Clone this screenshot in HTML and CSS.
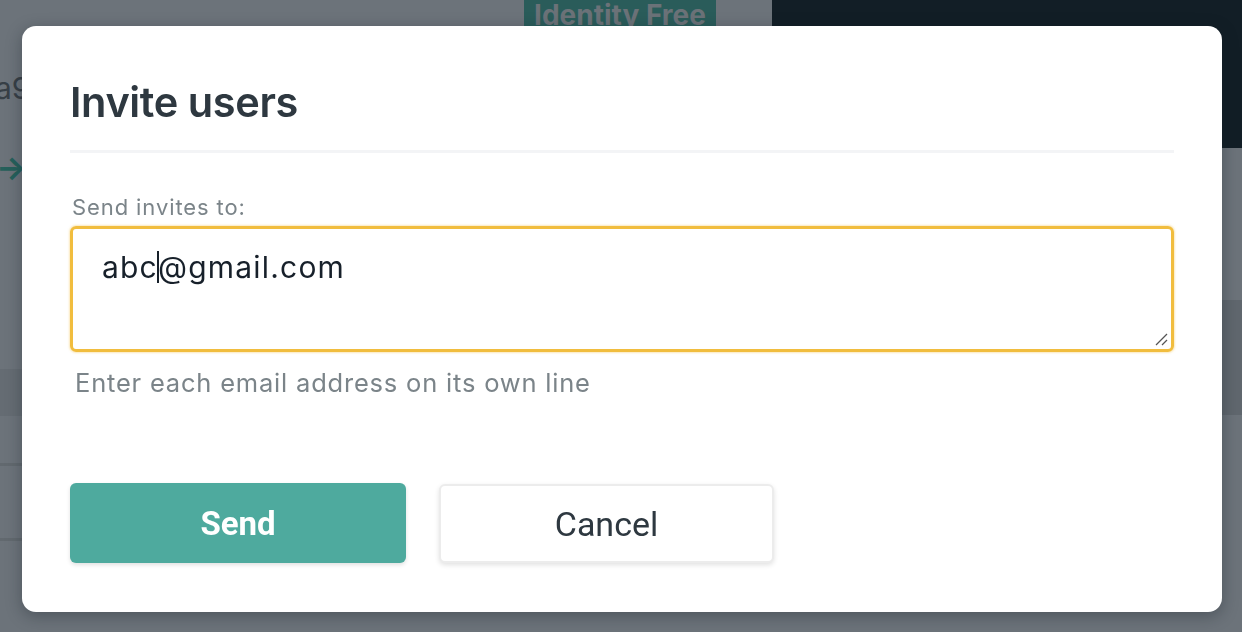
FILE: index.html
```html
<!DOCTYPE html>
<html lang="en">
<head>
<meta charset="utf-8">
<title>Invite users</title>
<link rel="stylesheet" href="styles.css">
</head>
<body>
<div class="page">
  <div class="main">
    <div class="topbar">
      <span class="badge">Identity Free</span>
    </div>
    <div class="crumb">a9</div>
    <div class="arrow">→</div>
    <div class="table">
      <div class="row row-head"></div>
      <div class="row"></div>
      <div class="row row-tall"></div>
    </div>
  </div>
  <div class="side">
    <div class="side-dark"></div>
    <div class="side-gap"></div>
    <div class="side-band"></div>
  </div>
</div>

<div class="modal">
  <h1 class="modal-title">Invite users</h1>
  <div class="field">
    <label class="field-label">Send invites to:</label>
    <div class="textarea">
      <span class="ta-text">abc<span class="caret"></span>@gmail.com</span>
      <svg class="grip" width="14" height="14" viewBox="0 0 14 14">
        <line x1="13" y1="2" x2="2" y2="13" stroke="#555" stroke-width="1.3"/>
        <line x1="13" y1="8" x2="8" y2="13" stroke="#555" stroke-width="1.3"/>
      </svg>
    </div>
    <p class="hint">Enter each email address on its own line</p>
  </div>
  <div class="actions">
    <button class="btn btn-primary">Send</button>
    <button class="btn btn-secondary">Cancel</button>
  </div>
</div>
</body>
</html>
```

FILE: styles.css
```css
html, body {
  margin: 0;
  padding: 0;
  width: 1242px;
  height: 632px;
  overflow: hidden;
  background: #6c737a;
  font-family: Inter, "Noto Sans", sans-serif;
}

.page {
  display: flex;
  width: 1242px;
  height: 632px;
}

.main {
  width: 772px;
  display: flex;
  flex-direction: column;
}

.topbar {
  height: 40px;
  padding-left: 524px;
}

.badge {
  display: inline-block;
  width: 192px;
  height: 40px;
  margin-top: -6px;
  box-sizing: border-box;
  padding-top: 4px;
  background: #2a5c5a;
  color: #6b7278;
  font-weight: 700;
  font-size: 28px;
  line-height: 34px;
  text-align: center;
  border-radius: 5px;
}

.crumb {
  margin-top: 30px;
  margin-left: -5px;
  font-size: 30px;
  color: #373f46;
  line-height: 36px;
}

.arrow {
  margin-top: 47px;
  margin-left: -4px;
  font-size: 32px;
  font-weight: 700;
  color: #26605b;
  line-height: 30px;
}

.table {
  margin-top: 186px;
}

.row {
  height: 47px;
  border-bottom: 3px solid #62696f;
}

.row-head {
  background: #656c73;
  border-bottom: none;
  height: 47px;
}

.row-tall {
  height: 72px;
}

.side {
  flex: 1;
  display: flex;
  flex-direction: column;
}

.side-dark {
  height: 148px;
  background: #121e26;
}

.side-gap {
  height: 152px;
}

.side-band {
  height: 115px;
  background: #60676e;
}

.modal {
  position: fixed;
  left: 22px;
  top: 26px;
  width: 1200px;
  height: 586px;
  box-sizing: border-box;
  padding: 0 48px;
  background: #ffffff;
  border-radius: 14px;
  box-shadow: 0 4px 16px rgba(20, 28, 36, 0.35);
}

.modal-title {
  margin: 0;
  padding-top: 52px;
  padding-bottom: 24px;
  font-size: 41.5px;
  line-height: 48px;
  font-weight: 600;
  color: #2e3840;
  letter-spacing: -0.4px;
  border-bottom: 3px solid #f3f4f6;
}

.field {
  margin-top: 42px;
}

.field-label {
  display: block;
  margin-left: 2px;
  font-size: 22px;
  line-height: 24px;
  letter-spacing: 0.9px;
  color: #7b8489;
}

.textarea {
  position: relative;
  margin-top: 7px;
  height: 126px;
  box-sizing: border-box;
  border: 3px solid #f1bd3e;
  border-radius: 6px;
  box-shadow: 0 0 2px 1px rgba(241, 189, 62, 0.35);
  padding: 20px 29px;
}

.ta-text {
  font-size: 30px;
  line-height: 37px;
  letter-spacing: 1.2px;
  color: #17202a;
}

.caret {
  display: inline-block;
  width: 1.5px;
  height: 32px;
  background: #17202a;
  vertical-align: -5px;
  margin: 0 -0.75px;
}

.grip {
  position: absolute;
  right: 3px;
  bottom: 3px;
}

.hint {
  margin: 16px 0 0 5px;
  font-size: 25.5px;
  line-height: 30px;
  letter-spacing: 0.8px;
  color: #7b8489;
}

.actions {
  display: flex;
  gap: 33px;
  margin-top: 85px;
}

.btn {
  width: 336px;
  height: 80px;
  border-radius: 6px;
  font-family: Roboto, "Liberation Sans", sans-serif;
  font-size: 33px;
  cursor: pointer;
}

.btn-primary {
  background: #4eaa9e;
  color: #ffffff;
  font-weight: 700;
  border: none;
  box-shadow: 0 2px 4px rgba(0, 0, 0, 0.12);
}

.btn-secondary {
  background: #ffffff;
  color: #2e3840;
  font-weight: 400;
  font-size: 34px;
  width: 335px;
  height: 79px;
  margin-top: 1px;
  border: 2px solid #ececec;
  box-shadow: 0 2px 5px rgba(0, 0, 0, 0.12);
}
```
